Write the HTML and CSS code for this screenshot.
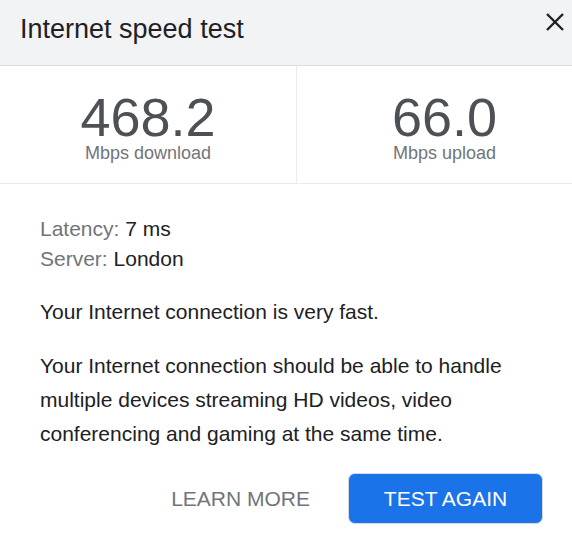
FILE: index.html
```html
<!DOCTYPE html>
<html lang="en">
<head>
<meta charset="utf-8">
<title>Internet speed test</title>
<link rel="stylesheet" href="styles.css">
</head>
<body>
<div class="dialog">
  <header class="head">
    <h1 class="title">Internet speed test</h1>
    <button class="close" aria-label="Close">
      <svg width="20" height="20" viewBox="0 0 20 20"><path d="M2 2 L18 18 M18 2 L2 18" stroke="#202124" stroke-width="2.4" fill="none"/></svg>
    </button>
  </header>
  <section class="stats">
    <div class="stat">
      <div class="num">468.2</div>
      <div class="unit">Mbps download</div>
    </div>
    <div class="stat">
      <div class="num">66.0</div>
      <div class="unit">Mbps upload</div>
    </div>
  </section>
  <section class="body">
    <div class="meta">
      <div><span class="key">Latency:</span> 7 ms</div>
      <div><span class="key">Server:</span> London</div>
    </div>
    <p class="para">Your Internet connection is very fast.</p>
    <p class="para">Your Internet connection should be able to handle multiple devices streaming HD videos, video conferencing and gaming at the same time.</p>
    <div class="actions">
      <button class="learn">LEARN MORE</button>
      <button class="again">TEST AGAIN</button>
    </div>
  </section>
</div>
</body>
</html>
```
FILE: styles.css
```css
html, body {
  margin: 0;
  padding: 0;
  overflow: hidden;
  background: #fff;
}
.dialog {
  width: 592px;
  font-family: "Liberation Sans", Arial, sans-serif;
  color: #202124;
}
.head {
  box-sizing: border-box;
  height: 66px;
  background: #f1f3f4;
  border-bottom: 1px solid #dadce0;
  display: flex;
  justify-content: space-between;
  align-items: flex-start;
  padding: 14px 27px 0 20px;
}
.title {
  margin: 0;
  font-size: 27px;
  font-weight: normal;
  line-height: 30px;
  color: #202124;
}
.close {
  border: 0;
  background: none;
  padding: 0;
  margin-top: -2px;
  width: 20px;
  height: 20px;
  display: block;
}
.close svg { display: block; }
.stats {
  display: grid;
  grid-template-columns: 296px 1fr;
  border-bottom: 1px solid #ebebeb;
}
.stat {
  text-align: center;
  padding: 24px 0 21px;
}
.stat + .stat {
  border-left: 1px solid #ebebeb;
}
.num {
  font-size: 54px;
  line-height: 54px;
  color: #4d5156;
}
.unit {
  font-size: 18px;
  line-height: 18px;
  color: #70757a;
}
.body {
  padding: 30px 49px 0 40px;
  font-size: 21px;
}
.meta {
  line-height: 30px;
}
.key {
  color: #70757a;
}
.para {
  margin: 21px 0 0;
  line-height: 34px;
}
.para + .para {
  margin-top: 20px;
}
.actions {
  display: flex;
  justify-content: flex-end;
  align-items: center;
  gap: 38px;
  margin-top: 22px;
}
.actions button {
  font-family: "Liberation Sans", Arial, sans-serif;
  font-size: 21px;
  cursor: pointer;
}
.learn {
  border: 0;
  background: none;
  padding: 0;
  color: #70757a;
}
.again {
  width: 195px;
  height: 51px;
  border: 1px solid #d6d9de;
  border-radius: 7px;
  background: #1a73e8;
  color: #fff;
  padding: 0;
}
```
